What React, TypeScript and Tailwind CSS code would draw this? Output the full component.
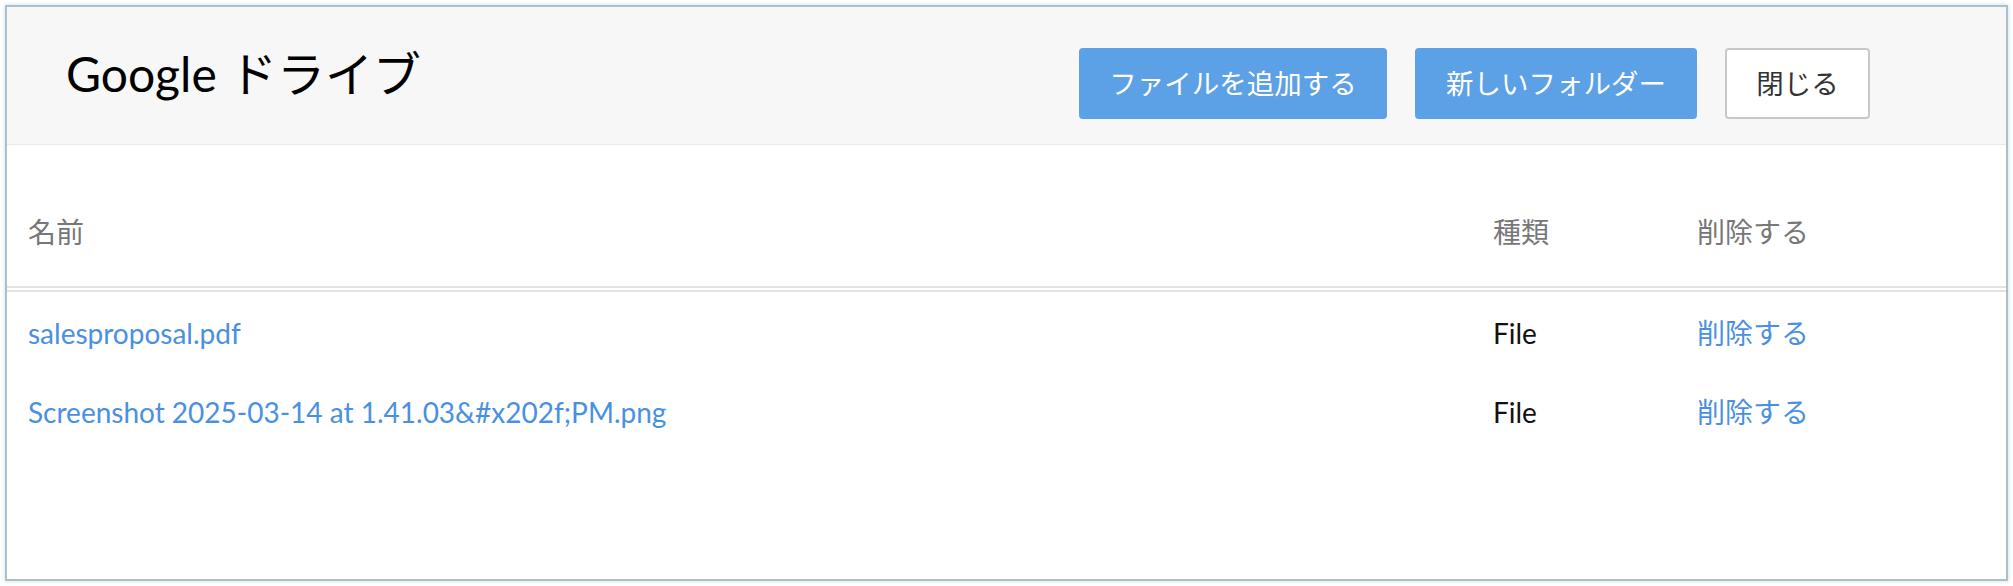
const font = { fontFamily: 'Lato, "Noto Sans CJK JP", sans-serif' }

const files = [
  { name: 'salesproposal.pdf', kind: 'File' },
  { name: 'Screenshot 2025-03-14 at 1.41.03&#x202f;PM.png', kind: 'File' },
]

function Header() {
  return (
    <div className="flex items-start justify-between h-[137px] bg-[#f7f7f7] border-b border-[#e9e9e9] pl-[59px] pr-[136px] box-content">
      <h1 className="pt-[43px] text-[48px] leading-none font-normal text-black">Google ドライブ</h1>
      <div className="flex gap-[28px] pt-[41px]">
        <button className="flex items-center justify-center w-[308px] h-[71px] rounded-[4px] bg-[#5ca0e5] text-white text-[27.5px]">
          ファイルを追加する
        </button>
        <button className="flex items-center justify-center w-[282px] h-[71px] rounded-[4px] bg-[#5ca0e5] text-white text-[27.5px]">
          新しいフォルダー
        </button>
        <button className="flex items-center justify-center w-[145px] h-[71px] rounded-[4px] bg-white border-2 border-[#c8c8c8] text-[#333] text-[27.5px]">
          閉じる
        </button>
      </div>
    </div>
  )
}

function FileTable() {
  return (
    <div className="text-[28px] leading-[40px]">
      <div className="grid grid-cols-[1465px_204px_1fr] text-[#777] border-b-2 border-[#e3e3e3]">
        <div className="pl-[21px] pt-[67px] pb-[34px]">名前</div>
        <div className="pl-[21px] pt-[67px] pb-[34px]">種類</div>
        <div className="pl-[21px] pt-[67px] pb-[34px]">削除する</div>
      </div>
      <div className="mt-[2px] border-t-2 border-[#e3e3e3]">
        {files.map((f) => (
          <div key={f.name} className="grid grid-cols-[1465px_204px_1fr]">
            <div className="pl-[21px] pt-[21px] pb-[18px]">
              <a href="#" className="text-[#4a90e2]">{f.name}</a>
            </div>
            <div className="pl-[21px] pt-[21px] pb-[18px] text-[#111]">{f.kind}</div>
            <div className="pl-[21px] pt-[21px] pb-[18px]">
              <a href="#" className="text-[#4a90e2]">削除する</a>
            </div>
          </div>
        ))}
      </div>
    </div>
  )
}

export default function App() {
  return (
    <div className="p-[5px] bg-white" style={font}>
      <div className="h-[576px] border-2 border-[#aac0cc] bg-white shadow-[0_0_4px_rgba(170,192,204,0.6)] overflow-hidden">
        <Header />
        <FileTable />
      </div>
    </div>
  )
}
